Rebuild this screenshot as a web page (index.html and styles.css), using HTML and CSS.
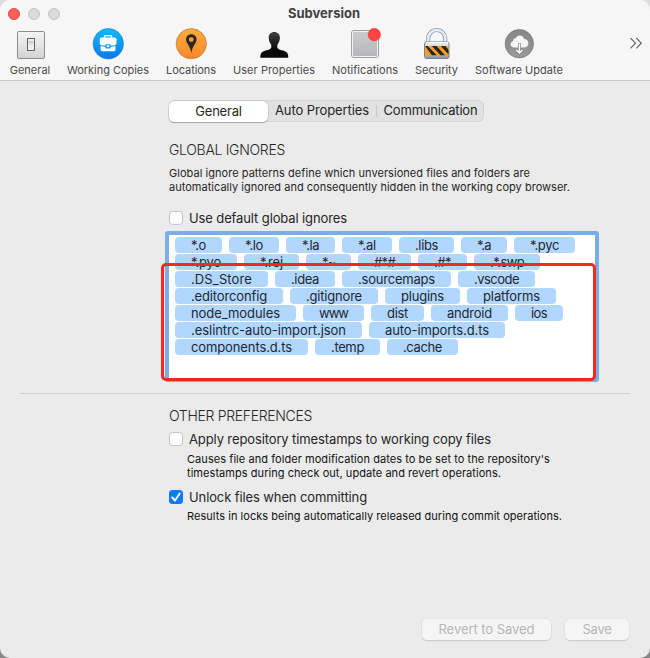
FILE: index.html
```html
<!DOCTYPE html>
<html lang="en">
<head>
<meta charset="utf-8">
<title>Subversion</title>
<link rel="stylesheet" href="styles.css">
</head>
<body>
<div class="window">
  <header class="titlebar">
    <div class="lights"><i class="light close"></i><i class="light"></i><i class="light"></i></div>
    <h1 class="title"><span data-w="72">Subversion</span></h1>
    <nav class="toolbar">
      <div class="tool" style="width:40px">
        <svg width="32" height="34" viewBox="-1 0 32 34"><defs><linearGradient id="g1" x2="0" y2="1"><stop stop-color="#f5f5f5"/><stop offset="1" stop-color="#d2d2d2"/></linearGradient><linearGradient id="g2" x2="0" y2="1"><stop stop-color="#c2c4c6"/><stop offset="1" stop-color="#f4f4f4"/></linearGradient></defs><rect x="2.5" y="4.5" width="27" height="27" rx="1.5" fill="url(#g1)" stroke="#8d8d8d"/><rect x="12.5" y="11.5" width="7" height="12" fill="#eee" stroke="#626568"/><rect x="13.5" y="14" width="5" height="5" fill="url(#g2)"/></svg>
        <span data-w="40.500">General</span></div>
      <div class="tool" style="width:82px">
        <svg width="32" height="34" viewBox="0 0 32 34"><defs><linearGradient id="g3" x2="0" y2="1"><stop stop-color="#13baf8"/><stop offset="1" stop-color="#087bea"/></linearGradient></defs><circle cx="16.300" cy="16.700" r="15.2" fill="url(#g3)" stroke="#1680d1" stroke-width=".6"/><path d="M12.5 11V8.700h7V11" fill="none" stroke="#fff" stroke-width="1.200"/><path d="M9.500 10.500h13q2 0 2 2V16q0 2-2.500 2.500h-3.500v-1.300h-5v1.300H10Q7.700 18 7.700 16v-3.500q0-2 1.800-2z" fill="#fff"/><path d="M8.600 19q2 .8 4.900.8v1.200q0 .6.700.6h3.600q.7 0 .7-.6v-1.200q3.200 0 5-.8v3.500q0 1.700-1.700 1.700H10.300q-1.700 0-1.700-1.700z" fill="#fff"/><path d="M14.700 18.300h2.600v2h-2.600z" fill="#fff"/></svg>
        <span data-w="82">Working Copies</span></div>
      <div class="tool" style="width:50px">
        <svg width="32" height="34" viewBox="0 0 32 34"><defs><linearGradient id="g4" x2="0" y2="1"><stop stop-color="#ffad3d"/><stop offset="1" stop-color="#fb8629"/></linearGradient></defs><circle cx="16.300" cy="16.700" r="15.100" fill="url(#g4)" stroke="#b78243" stroke-width=".8"/><path fill-rule="evenodd" d="M16.300 7.300c-3.300 0-5.300 2.400-5.300 5.200 0 4 4.400 6.300 5.300 13.800.9-7.500 5.300-9.800 5.300-13.800 0-2.800-2-5.200-5.300-5.200zm0 2.900a2.400 2.400 0 1 1 0 4.800 2.400 2.400 0 0 1 0-4.800z" fill="#2b2927"/></svg>
        <span data-w="50">Locations</span></div>
      <div class="tool" style="width:82px">
        <svg width="32" height="34" viewBox="0 0 32 34"><defs><linearGradient id="g5" x2="0" y2="1"><stop stop-color="#414141"/><stop offset=".7" stop-color="#080808"/></linearGradient></defs><path d="M16.200 5c-3.500 0-5.700 2.400-5.500 6 .2 3.400 1.300 5.200 2.600 7v2.500c-1 3-7 2.500-9.600 5-1 1.200-1.500 3-1.400 5.300h28c.1-2.300-.4-4.100-1.400-5.300-2.600-2.500-8.600-2-9.600-5V18c1.300-1.800 2.400-3.600 2.600-7 .2-3.600-2.200-6-5.700-6z" fill="url(#g5)"/></svg>
        <span data-w="82">User Properties</span></div>
      <div class="tool" style="width:66px">
        <svg width="32" height="34" viewBox="0 0 32 34"><defs><linearGradient id="g6" x2="0" y2="1"><stop stop-color="#c9cacd"/><stop offset="1" stop-color="#b4b7bb"/></linearGradient></defs><rect x="2.500" y="3.500" width="27" height="27" rx="2.500" fill="#f1f1f1" stroke="#a2a2a2"/><rect x="4" y="5" width="24" height="24" rx="1" fill="url(#g6)"/><circle cx="25.300" cy="7.600" r="6.300" fill="#fc4540" stroke="#e83a37" stroke-width=".5"/></svg>
        <span data-w="66">Notifications</span></div>
      <div class="tool" style="width:43px">
        <svg width="32" height="34" viewBox="0 0 32 34"><defs><linearGradient id="g7" x2="0" y2="1"><stop stop-color="#eef1f4"/><stop offset="1" stop-color="#8f989f"/></linearGradient><clipPath id="c7"><rect x="4" y="19" width="23.500" height="9.500"/></clipPath></defs><path d="M7.500 17V11.500a8.500 8.500 0 0 1 17 0V17" transform="translate(-.300)" fill="none" stroke="#8fa0b4" stroke-width="4.200"/><path d="M7.500 17V11.500a8.500 8.500 0 0 1 17 0V17" transform="translate(-.300)" fill="none" stroke="#e6edf5" stroke-width="2.500"/><rect x="3.500" y="15" width="24.500" height="16.500" rx="2" fill="url(#g7)" stroke="#6b7b88" stroke-width=".9"/><path d="M5 15.600h22" stroke="#fff"/><g clip-path="url(#c7)"><path fill="#fb9d22" d="M4 19h24v10H4z"/><path fill="#292622" d="M4 18.800h2.500l9.500 9.800h-5zM10.700 18.800h4.600l9 9.800h-4.600zM19.500 18.800h4.600l4 4.500v4.900z"/></g></svg>
        <span data-w="43">Security</span></div>
      <div class="tool" style="width:88px">
        <svg width="32" height="34" viewBox="0 0 32 34"><defs><linearGradient id="g8" x2="0" y2="1"><stop stop-color="#858585"/><stop offset="1" stop-color="#999"/></linearGradient></defs><circle cx="16.300" cy="16.700" r="14.200" fill="url(#g8)" stroke="#777" stroke-width=".7"/><path d="M10.800 20.400c-2.200 0-3.200-1.400-3.200-3.100 0-1.600 1-2.800 2.600-3-.3-2 .9-3.200 2.600-2.900.8-2.200 2.300-2.900 4-2.900 2.300 0 3.800 1.300 4.300 3.600 2.400-.2 4.300 1.700 4.300 4.200 0 2.300-1.500 4.100-3.700 4.100z" fill="#f5f5f5"/><path d="M16.400 16v10m-3-3 3 3 3-3" fill="none" stroke="#858585" stroke-width="2.800"/><path d="M16.400 16.500v9.500m-3-3 3 3 3-3" fill="none" stroke="#fff" stroke-width="1.400"/></svg>
        <span data-w="88">Software Update</span></div>
      <svg class="more" width="14" height="14" viewBox="0 0 14 14"><path d="M1.500 2 6.500 7.200l-5 5.200M7.300 2l5 5.200-5 5.200" fill="none" stroke="#676767" stroke-width="1.200"/></svg>
    </nav>
  </header>
  <main class="content">
    <div class="tabs">
      <div class="tab active"><span data-w="46.500">General</span></div>
      <div class="tab auto"><span data-w="94">Auto Properties</span></div>
      <i class="divider"></i>
      <div class="tab comm"><span data-w="94">Communication</span></div>
    </div>
    <section class="ignores">
      <h2><span data-w="116">GLOBAL IGNORES</span></h2>
      <p class="note"><span data-w="361">Global ignore patterns define which unversioned files and folders are</span><br><span data-w="401">automatically ignored and consequently hidden in the working copy browser.</span></p>
      <div class="check"><i class="box"></i><span data-w="158">Use default global ignores</span></div>
      <div class="field">
        <div class="row"><b style="width:47px">*.o</b><b style="width:50px">*.lo</b><b style="width:49px">*.la</b><b style="width:50px">*.al</b><b style="width:55px">.libs</b><b style="width:46px">*.a</b><b style="width:61px">*.pyc</b></div>
        <div class="row"><b style="width:62px">*.pyo</b><b style="width:55px">*.rej</b><b style="width:45px">*~</b><b style="width:53px">#*#</b><b style="width:49px">.#*</b><b style="width:66px">.*.swp</b></div>
        <div class="row"><b style="width:93px">.DS_Store</b><b style="width:60px">.idea</b><b style="width:109px">.sourcemaps</b><b style="width:77px">.vscode</b></div>
        <div class="row"><b style="width:108px">.editorconfig</b><b style="width:88px">.gitignore</b><b style="width:75px">plugins</b><b style="width:89px">platforms</b></div>
        <div class="row"><b style="width:121px">node_modules</b><b style="width:61px">www</b><b style="width:53px">dist</b><b style="width:77px">android</b><b style="width:48px">ios</b></div>
        <div class="row"><b style="width:187px">.eslintrc-auto-import.json</b><b style="width:136px">auto-imports.d.ts</b></div>
        <div class="row"><b style="width:133px">components.d.ts</b><b style="width:65px">.temp</b><b style="width:71px">.cache</b></div>
        <div class="highlight"></div>
      </div>
    </section>
    <hr>
    <section class="other">
      <h2><span data-w="143">OTHER PREFERENCES</span></h2>
      <div class="check"><i class="box"></i><span data-w="302">Apply repository timestamps to working copy files</span></div>
      <p class="note dark"><span data-w="363">Causes file and folder modification dates to be set to the repository's</span><br><span data-w="314">timestamps during check out, update and revert operations.</span></p>
      <div class="check second"><i class="box on"><svg width="14" height="14" viewBox="0 0 14 14"><path d="m3.300 7.500 2.700 3L10.700 3.500" fill="none" stroke="#fff" stroke-width="1.900" stroke-linecap="round" stroke-linejoin="round"/></svg></i><span data-w="178">Unlock files when committing</span></div>
      <p class="note dark last"><span data-w="375">Results in locks being automatically released during commit operations.</span></p>
    </section>
  </main>
  <footer class="actions"><div class="btn revert"><span data-w="96">Revert to Saved</span></div><div class="btn save"><span data-w="29">Save</span></div></footer>
</div>
<script src="fit.js"></script>
</body>
</html>
```
FILE: styles.css
```css
* { box-sizing: border-box; }
body { margin: 0; background: linear-gradient(#ddd, #888); font: 13px Inter, "Liberation Sans", sans-serif; color: #262626; }
.window { display: flex; flex-direction: column; width: 650px; height: 658px; background: #ebebeb; border-radius: 10px; overflow: hidden; }
span, b { white-space: nowrap; }
.titlebar { position: relative; height: 81px; background: #f6f6f6; border-bottom: 1px solid #c9c9c9; }
.lights { position: absolute; left: 8px; top: 8px; display: flex; gap: 8px; }
.light { width: 12px; height: 12px; border-radius: 50%; background: #dbdbdb; border: 1px solid #c3c3c3; }
.close { background: #fe5f57; border-color: #e24640; }
.title { margin: 0; height: 27px; line-height: 27px; font-size: 13px; font-weight: 700; text-align: center; color: #414141; padding-right: 2px; }
.toolbar { display: flex; gap: 17px; padding-left: 10px; }
.tool { display: flex; flex-direction: column; align-items: center; font-size: 11px; line-height: 14px; color: #4a4a4a; }
.tool svg { display: block; margin-bottom: 2px; flex: none; }
.more { margin: 9px 7px 0 auto; }
.content { padding-top: 19px; flex: 1; }
.tabs { display: flex; align-items: center; width: 315px; height: 22px; margin-left: 169px; border-radius: 6px; background: #e1e1e1; box-shadow: inset 0 0 0 1px #d5d5d5; }
.tab { text-align: center; height: 22px; line-height: 21px; }
.active { width: 99px; height: 21px; line-height: 20px; background: #fff; border-radius: 5.5px; box-shadow: 0 0 0 .5px #bababa, 0 1px 1px #999; }
.auto { width: 108px; }
.comm { width: 107px; }
.divider { width: 1px; height: 12px; background: #c9c9c9; }
.ignores, .other { padding-left: 169px; }
h2 { margin: 0; font-size: 14px; font-weight: 300; line-height: 18px; }
.ignores h2 { padding-top: 19px; }
.note { margin: 7px 0 0; font-size: 11px; line-height: 14px; }
.check { display: flex; align-items: center; height: 16px; gap: 6px; margin-top: 16px; }
.box { display: block; width: 14px; height: 14px; border-radius: 3.5px; background: #fff; border: 1px solid #c3c3c3; flex: none; }
.on { border: 0; background: #087bff; }
.on svg { display: block; }
.field { position: relative; width: 434px; height: 151px; margin: 5px 0 0 -4px; border: 4px solid #79aeeb; border-radius: 3px; background: #fff; padding: 2px 0 0 6px; }
.row { display: flex; gap: 7px; height: 17px; }
.row b { height: 16px; border-radius: 4px; background: #b2d7ff; text-align: center; font-weight: 400; line-height: 16px; color: #1d2730; }
.highlight { position: absolute; left: -8px; top: 28px; width: 435px; height: 118px; border: 3px solid #f9271c; border-radius: 5px; }
hr { margin: 11px 20px 0; border: 0; height: 1px; background: #d0d0d0; }
.other h2 { padding-top: 13px; }
.other .check { margin-top: 6px; }
.other .dark { margin: 5px 0 0 18px; color: #111; }
.other .second { margin-top: 9px; }
.other .last { margin-top: 4px; }
.actions { display: flex; gap: 14px; justify-content: flex-end; padding: 0 21px 18px 0; }
.btn { height: 21px; line-height: 20px; background: #f5f5f5; border-radius: 5px; text-align: center; color: #b5b5b5; box-shadow: 0 0 0 .5px #ddd, 0 1px 1px #bbb; }
.revert { width: 129px; }
.save { width: 64px; }
```
FILE: fit.js
```js
// Tracks every label so that its run has the width given in data-w.
document.querySelectorAll('[data-w]').forEach(el => {
  el.style.letterSpacing = '0';
  const diff = parseFloat(el.dataset.w) - el.getBoundingClientRect().width;
  el.style.letterSpacing = (diff / el.textContent.length) + 'px';
});
document.querySelectorAll('.row b').forEach(el => {
  const range = document.createRange();
  range.selectNodeContents(el);
  const diff = parseFloat(el.style.width) - 32 - range.getBoundingClientRect().width;
  el.style.letterSpacing = (diff / el.textContent.length) + 'px';
});
```
